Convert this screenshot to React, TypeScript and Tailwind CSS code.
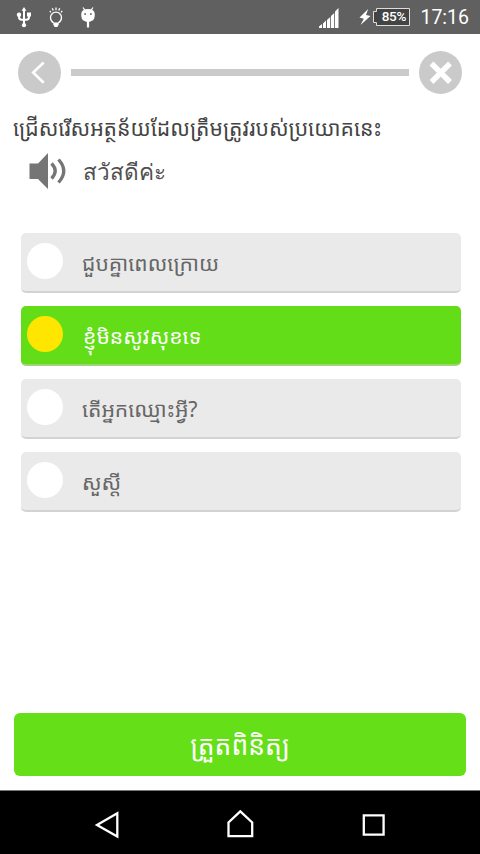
import clsx from "clsx";

const options = [
  { id: 1, text: "ជួបគ្នាពេលក្រោយ" },
  { id: 2, text: "ខ្ញុំមិនសូវសុខទេ" },
  { id: 3, text: "តើអ្នកឈ្មោះអ្វី?" },
  { id: 4, text: "សួស្តី" },
];

const StatusBar = () => {
  return (
    <div className="h-[34px] shrink-0 flex items-center justify-between bg-[#606060] text-white">
      <div className="flex items-center">
        {/* usb */}
        <svg className="ml-4 w-4 h-[22px]" viewBox="0 0 16 22" fill="none" stroke="white" strokeWidth="2">
          <path d="M8 4v14M3 9v2q0 2.800 2.800 2.800h4.400q2.800 0 2.800-2.800V8" />
          <path d="M8 1l2.400 3.700H5.600z" fill="white" stroke="none" />
          <circle cx="3" cy="8.700" r="2.200" fill="white" stroke="none" />
          <path d="M11 6.500h4v4h-4z" fill="white" stroke="none" />
          <circle cx="8" cy="19.200" r="2.100" fill="white" stroke="none" />
        </svg>
        {/* bulb */}
        <svg className="ml-4 w-4 h-[22px]" viewBox="0 0 16 22" fill="none" stroke="white" strokeWidth="1.300">
          <path d="M5.800 17C3.500 15.700 2.500 13.600 2.500 11.700a5.500 5.500 0 0 1 11 0c0 1.900-1 4-3.300 5.300" />
          <path d="M5.300 16.500h5.400v2.200L9.300 21H6.700l-1.400-2.300z" fill="white" stroke="none" />
          <path d="M8 1.500v2.800M4.300 2.200l1 2.300M11.700 2.200l-1 2.300M1.800 5l1.200 1.400M14.200 5L13 6.400" />
        </svg>
        {/* android debug */}
        <svg className="ml-4 w-4 h-[22px]" viewBox="0 0 16 22">
          <path d="M3 1.500l2 3M13 1.500l-2 3" stroke="white" strokeWidth="1.300" />
          <path d="M1.200 8.500q0-5.500 6.800-5.500t6.800 5.500-3.300 6.500q-3.500 2-7 0-3.300-1-3.300-6.500z" fill="white" />
          <circle cx="5.100" cy="8" r=".9" fill="#606060" />
          <circle cx="10.900" cy="8" r=".9" fill="#606060" />
          <path d="M8 15v6.500" stroke="white" strokeWidth="2.200" />
        </svg>
      </div>
      <div className="flex items-center font-['Roboto',sans-serif]">
        <svg className="mt-[2px] w-5 h-5" viewBox="0 0 20 20" fill="white">
          <path d="M0 20v-1.500l3-2.500v4zM4 20v-4.500l3-3V20zM8 20v-8l3.200-3v11zM12 20V8l3.200-3v15zM16 20V3.500L19.500 0v20z" />
        </svg>
        <svg className="ml-[20px] w-[12px] h-4" viewBox="0 0 12 16" fill="white">
          <path d="M9.200 0L.5 8.500l4.300 1.300L1.500 16 11.500 7 7 6z" />
        </svg>
        {/* battery */}
        <div className="ml-[2px] w-[37px] h-[18px] relative pl-[4px] flex items-center justify-center">
          <svg className="absolute inset-0 w-full h-full" viewBox="0 0 37 18" fill="#444444" stroke="#dddddd">
            <path d="M3.500 .5h33v17h-33v-3h-3v-11h3z" />
          </svg>
          <p className="relative text-[13.500px] leading-none font-medium tracking-[-0.3px]">85%</p>
        </div>
        <p className="ml-[10px] mr-[11px] pt-px text-[19.500px] leading-[34px]">17:16</p>
      </div>
    </div>
  );
};

const LessonHeader = () => {
  return (
    <div className="mt-[16px] mb-px h-11 pl-[18px] pr-[18px] flex items-center">
      <button className="w-[43px] h-[43px]">
        <svg className="w-full h-full" viewBox="0 0 43 43" fill="none">
          <circle cx="21.500" cy="21.500" r="21.500" fill="#cacaca" />
          <path d="M25.700 11.500L15.200 21.500l10.500 10.300" stroke="white" strokeWidth="2.600" />
        </svg>
      </button>
      <div className="ml-[10px] mr-[10px] flex-1 h-[7px] bg-[#cacaca]"></div>
      <button className="w-[43px] h-[43px]">
        <svg className="w-full h-full" viewBox="0 0 43 43" fill="none">
          <circle cx="21.500" cy="21.500" r="21.500" fill="#cacaca" />
          <path d="M12.500 12.500l18.500 18.500M31 12.500L12.500 31" stroke="white" strokeWidth="5.400" />
        </svg>
      </button>
    </div>
  );
};

const Option = ({ text, selected }: { text: string; selected: boolean }) => {
  return (
    <button
      className={clsx(
        "h-[60px] pl-[6px] flex items-center rounded-[5px] text-left border-b-2",
        selected
          ? "bg-[#62dd17] border-[#9fd477] text-white"
          : "bg-[#eaeaea] border-[#d3d3d4] text-[#666666]"
      )}
    >
      <span
        className={clsx(
          "w-9 h-9 mb-[2px] rounded-full",
          selected ? "bg-[#ffe600]" : "bg-white"
        )}
      ></span>
      <span className={clsx("pt-px text-[21.100px]", selected ? "ml-5" : "ml-[19px]")}>
        {text}
      </span>
    </button>
  );
};

const NavigationBar = () => {
  return (
    <div className="h-16 shrink-0 bg-black border-t border-[#777777]">
      <svg className="w-full h-full" viewBox="0 0 480 63" fill="none" stroke="white" strokeWidth="2.300">
        <path d="M117.300 22.200v23.300L97 33.900z" />
        <path d="M228.500 45.200V31.500l11.800-11.200 11.900 11.200v13.700z" />
        <path d="M363.800 24.300h19.800v19.300h-19.800z" />
      </svg>
    </div>
  );
};

export default function App() {
  return (
    <div className="w-[480px] h-[854px] flex flex-col bg-white overflow-hidden font-['Noto_Sans_Khmer','Noto_Sans',sans-serif]">
      <StatusBar />
      <LessonHeader />
      <h1 className="mt-[17px] ml-[13px] text-[21.200px] leading-8 text-[#444444] whitespace-nowrap">
        ជ្រើសរើសអត្ថន័យដែលត្រឹមត្រូវរបស់ប្រយោគនេះ
      </h1>
      <div className="mt-[7px] mb-px ml-[28px] h-10 flex items-center">
        <svg className="w-[39px] h-[38px]" viewBox="0 0 39 38" fill="none">
          <path d="M1.500 11.500H10L20 1v36L10 27H1.500z" fill="#757575" />
          <path d="M23.500 11.500q7.500 7.500 0 15M30.500 7.500q10.500 11.500 0 23" stroke="#757575" strokeWidth="3.300" />
        </svg>
        <p className="ml-4 pt-px text-[22.500px] leading-8 text-[#505050]">สวัสดีค่ะ</p>
      </div>
      <div className="mt-[41px] ml-[21px] mr-[19px] flex flex-col gap-[13px]">
        {options.map((option) => (
          <Option key={option.id} text={option.text} selected={option.id === 2} />
        ))}
      </div>
      <button className="mt-auto mb-[14px] mx-[14px] h-[63px] shrink-0 rounded-[6px] bg-[#65df18] text-white text-[26.500px] pt-[2px]">
        ត្រួតពិនិត្យ
      </button>
      <NavigationBar />
    </div>
  );
}
